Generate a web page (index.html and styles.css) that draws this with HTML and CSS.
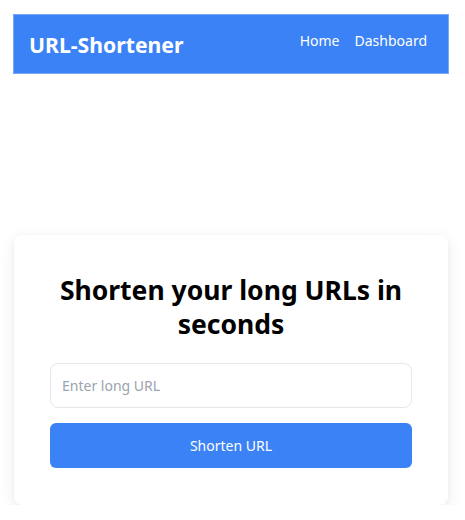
FILE: index.html
```html
<!DOCTYPE html>
<html lang="en">
<head>
<meta charset="utf-8">
<title>URL-Shortener</title>
<link rel="stylesheet" href="styles.css">
</head>
<body>
<nav class="navbar">
  <span class="brand">URL-Shortener</span>
  <div class="links">
    <a href="#" class="link">Home</a>
    <a href="#" class="link">Dashboard</a>
  </div>
</nav>
<main class="main">
  <section class="card">
    <h1 class="title">Shorten your long URLs in seconds</h1>
    <form class="form">
      <input class="input" type="text" placeholder="Enter long URL">
      <button class="button" type="button">Shorten URL</button>
    </form>
  </section>
</main>
</body>
</html>
```
FILE: styles.css
```css
* { box-sizing: border-box; }
html, body { margin: 0; padding: 0; background: #fff; }
body {
  font-family: "Noto Sans", "Open Sans", sans-serif;
  padding: 14px 16px 0 13px;
  width: 465px;
}
.navbar {
  height: 60px;
  width: 436px;
  background: #3b82f6;
  border: 1px solid #7aa8f7;
  display: flex;
  align-items: center;
  justify-content: space-between;
  padding: 0 21px 0 15px;
}
.brand {
  color: #fff;
  font-weight: 700;
  font-size: 21.2px;
  margin-top: 1px;
}
.links { display: flex; gap: 15px; margin-top: -7px; }
.link {
  color: #fff;
  text-decoration: none;
  font-size: 14px;
}
.main { padding-top: 161px; }
.card {
  width: 434px;
  margin-left: 1px;
  background: #fff;
  border-radius: 8px;
  box-shadow: 0 4px 16px rgba(0,0,0,0.08), 0 1px 4px rgba(0,0,0,0.04);
  padding: 38px 36px 37px;
}
.title {
  margin: 0 0 22px;
  text-align: center;
  font-size: 26.5px;
  line-height: 34px;
  font-weight: 700;
  color: #000;
}
.form { display: flex; flex-direction: column; gap: 15px; }
.input {
  height: 45px;
  border: 1px solid #e5e7eb;
  border-radius: 8px;
  padding: 0 11px;
  font-family: inherit;
  font-size: 14px;
  color: #111;
  outline: none;
}
.input::placeholder { color: #9ca3af; }
.button {
  height: 45px;
  border: none;
  border-radius: 6px;
  background: #3b82f6;
  color: #fff;
  font-family: inherit;
  font-size: 14px;
}
```
